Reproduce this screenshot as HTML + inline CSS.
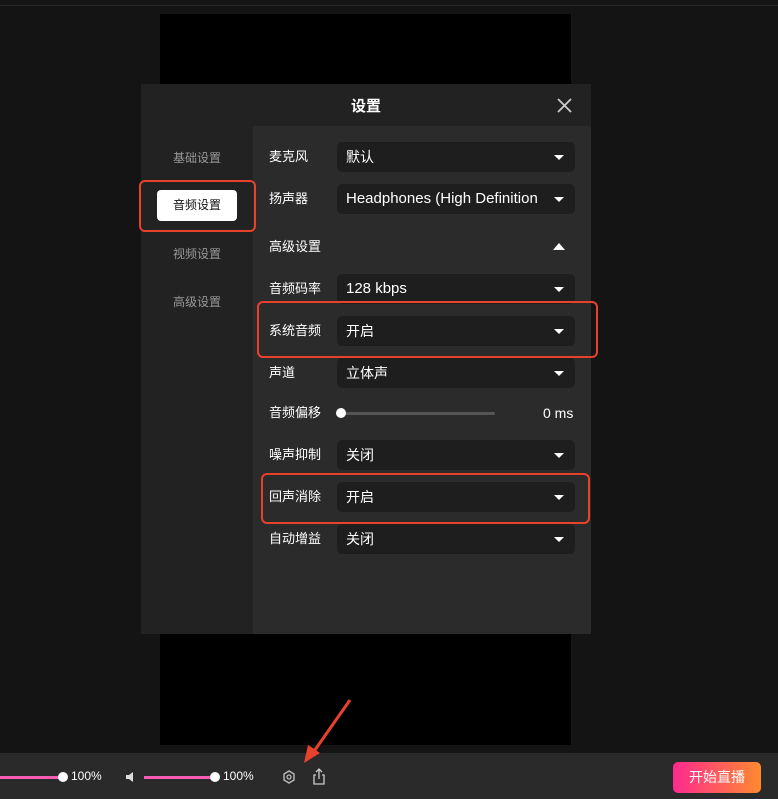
<!DOCTYPE html><html><head><meta charset="utf-8"><style>
*{margin:0;padding:0;box-sizing:border-box}
body{width:778px;height:799px;background:#141414;position:relative;overflow:hidden;font-family:"Liberation Sans","Noto Sans CJK SC",sans-serif;color:#fff}
.abs{position:absolute}
.sel{position:absolute;left:337px;width:238px;height:30px;background:#1e1e1e;border-radius:5px;font-size:14px;line-height:30px;padding-left:9px;color:#fff}
.sel:after{content:"";position:absolute;right:11px;top:13px;border-left:5px solid transparent;border-right:5px solid transparent;border-top:5px solid #fff}
.lab{position:absolute;left:269px;font-size:13px;line-height:16px;color:#fff}
.side{position:absolute;left:157px;width:80px;text-align:center;font-size:12px;line-height:16px;color:#999}
.red{position:absolute;border:2.5px solid #e8412c;border-radius:6px}
</style></head><body>
<div class="abs" style="left:0;top:5px;width:778px;height:1px;background:#2a2a2a"></div>
<div class="abs" style="left:160px;top:14px;width:411px;height:731px;background:#000"></div>
<div class="abs" style="left:141px;top:84px;width:450px;height:550px;background:#222"></div>
<div class="abs" style="left:253px;top:126px;width:338px;height:508px;background:#2b2b2b"></div>
<div class="abs" style="left:141px;top:97px;width:450px;text-align:center;font-size:15px;line-height:20px;font-weight:bold">设置</div>
<svg class="abs" style="left:557px;top:98px" width="15" height="15"><path d="M1 1L14 14M14 1L1 14" stroke="#ccc" stroke-width="1.8"/></svg>
<div class="side" style="top:150px">基础设置</div>
<div class="abs" style="left:157px;top:190px;width:80px;height:31px;background:#fff;border-radius:4px;color:#111;font-size:12px;text-align:center;line-height:31px">音频设置</div>
<div class="red" style="left:139px;top:180px;width:117px;height:52px"></div>
<div class="side" style="top:246px">视频设置</div>
<div class="side" style="top:294px">高级设置</div>
<div class="lab" style="top:149px">麦克风</div><div class="sel" style="top:142px">默认</div>
<div class="lab" style="top:191px">扬声器</div><div class="sel" style="top:184px;font-size:15px">Headphones (High Definition</div>
<div class="lab" style="top:239px">高级设置</div>
<div class="abs" style="left:553px;top:243px;border-left:6px solid transparent;border-right:6px solid transparent;border-bottom:7px solid #fff"></div>
<div class="lab" style="top:281px">音频码率</div><div class="sel" style="top:274px;font-size:15px">128 kbps</div>
<div class="lab" style="top:323px">系统音频</div><div class="sel" style="top:316px">开启</div>
<div class="red" style="left:257px;top:301px;width:341px;height:57px"></div>
<div class="lab" style="top:365px">声道</div><div class="sel" style="top:358px">立体声</div>
<div class="lab" style="top:405px">音频偏移</div>
<div class="abs" style="left:341px;top:412px;width:154px;height:3px;background:#555;border-radius:2px"></div>
<div class="abs" style="left:336px;top:408px;width:10px;height:10px;background:#fff;border-radius:50%"></div>
<div class="abs" style="left:543px;top:405px;font-size:14px;line-height:16px">0 ms</div>
<div class="lab" style="top:447px">噪声抑制</div><div class="sel" style="top:440px">关闭</div>
<div class="lab" style="top:489px">回声消除</div><div class="sel" style="top:482px">开启</div>
<div class="red" style="left:261px;top:473px;width:329px;height:51px"></div>
<div class="lab" style="top:531px">自动增益</div><div class="sel" style="top:524px">关闭</div>
<div class="abs" style="left:0;top:753px;width:778px;height:46px;background:#2a2a2a"></div>
<div class="abs" style="left:0;top:776px;width:62px;height:3px;background:#f55cb4"></div>
<div class="abs" style="left:58px;top:772px;width:10px;height:10px;background:#fff;border-radius:50%"></div>
<div class="abs" style="left:71px;top:769px;font-size:12px">100%</div>
<svg class="abs" style="left:125px;top:771px" width="12" height="12"><path d="M1 4H4L8 1V11L4 8H1Z" fill="#ddd"/></svg>
<div class="abs" style="left:144px;top:776px;width:70px;height:3px;background:#f55cb4"></div>
<div class="abs" style="left:210px;top:772px;width:10px;height:10px;background:#fff;border-radius:50%"></div>
<div class="abs" style="left:223px;top:769px;font-size:12px">100%</div>
<svg class="abs" style="left:282px;top:770px" width="14" height="14" viewBox="0 0 14 14"><path d="M7 1L12 4V10L7 13L2 10V4Z" fill="none" stroke="#bbb" stroke-width="1.4"/><circle cx="7" cy="7" r="2" fill="none" stroke="#bbb" stroke-width="1.3"/></svg>
<svg class="abs" style="left:312px;top:768px" width="14" height="17" viewBox="0 0 14 17"><path d="M4 7H2V16H12V7H10M7 11V1M4 4L7 1L10 4" fill="none" stroke="#ccc" stroke-width="1.3"/></svg>
<svg class="abs" style="left:300px;top:697px" width="55" height="70"><path d="M50 3L10 60" stroke="#e8412c" stroke-width="3"/><path d="M4 66L8 48L20 56Z" fill="#e8412c"/></svg>
<div class="abs" style="left:673px;top:762px;width:88px;height:31px;border-radius:5px;background:linear-gradient(90deg,#ff2a8e,#ff8a2e);font-size:14px;text-align:center;line-height:31px">开始直播</div>
</body></html>
